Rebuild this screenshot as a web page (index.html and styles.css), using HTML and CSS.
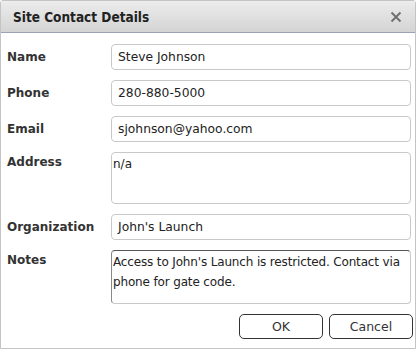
FILE: index.html
```html
<!DOCTYPE html>
<html>
<head>
<meta charset="utf-8">
<link rel="stylesheet" href="styles.css">
</head>
<body>
<div class="dialog">
  <div class="titlebar">
    <span class="title">Site Contact Details</span>
    <svg class="close" width="12" height="12" viewBox="0 0 12 12"><path d="M1.5 1.5 L10.5 10.5 M10.5 1.5 L1.5 10.5" stroke="#6e6e6e" stroke-width="1.8" fill="none"/></svg>
  </div>
  <div class="form">
    <label class="lbl">Name</label>
    <div class="field">Steve Johnson</div>
    <label class="lbl">Phone</label>
    <div class="field">280-880-5000</div>
    <label class="lbl">Email</label>
    <div class="field">sjohnson@yahoo.com</div>
    <label class="lbl lbl-area">Address</label>
    <div class="area address">n/a</div>
    <label class="lbl">Organization</label>
    <div class="field">John's Launch</div>
    <label class="lbl lbl-area">Notes</label>
    <div class="area notes">Access to John's Launch is restricted. Contact via phone for gate code.</div>
  </div>
  <div class="buttons">
    <button class="btn ok">OK</button>
    <button class="btn cancel">Cancel</button>
  </div>
</div>
</body>
</html>
```

FILE: styles.css
```css
html, body {
  margin: 0;
  padding: 0;
  background: #ffffff;
}
.dialog {
  width: 416px;
  height: 349px;
  box-sizing: border-box;
  border: 1px solid #c4c4c4;
  border-radius: 3px 3px 0 0;
  font-family: "DejaVu Sans", Verdana, sans-serif;
  color: #222;
  background: #fff;
}
.titlebar {
  height: 31px;
  background: linear-gradient(#ececec, #d4d4d4);
  border-bottom: 1px solid #9aa3b3;
  display: flex;
  align-items: center;
  justify-content: space-between;
  padding: 0 13px 0 12px;
}
.title {
  font-family: "DejaVu Sans Condensed", "DejaVu Sans", sans-serif;
  font-weight: bold;
  font-size: 13.5px;
  color: #222;
}
.close {
  display: block;
}
.form {
  display: grid;
  grid-template-columns: 104px 300px;
  row-gap: 10px;
  padding: 11px 0 0 6px;
}
.lbl {
  font-weight: bold;
  font-size: 12px;
  color: #333;
  padding-top: 6px;
}
.lbl-area {
  padding-top: 3px;
}
.field {
  box-sizing: border-box;
  height: 26px;
  border: 1px solid #c9c9c9;
  border-radius: 4px;
  padding: 0 6px;
  font-size: 12.3px;
  line-height: 24px;
  color: #222;
}
.area {
  box-sizing: border-box;
  border: 1px solid #c9c9c9;
  border-radius: 4px;
  padding: 1px 1px;
  font-size: 12px;
  line-height: 20px;
  color: #222;
}
.address {
  height: 52px;
}
.notes {
  height: 54px;
  border-top-color: #555;
  border-left-color: #888;
  letter-spacing: -0.15px;
}
.buttons {
  display: flex;
  justify-content: flex-end;
  gap: 6px;
  padding: 10px 2px 0 0;
}
.btn {
  box-sizing: border-box;
  width: 84px;
  height: 25px;
  background: #fff;
  border: 1px solid #333;
  border-radius: 5px;
  font-family: "DejaVu Sans", Verdana, sans-serif;
  font-size: 12.5px;
  color: #333;
  padding: 0;
}
```
